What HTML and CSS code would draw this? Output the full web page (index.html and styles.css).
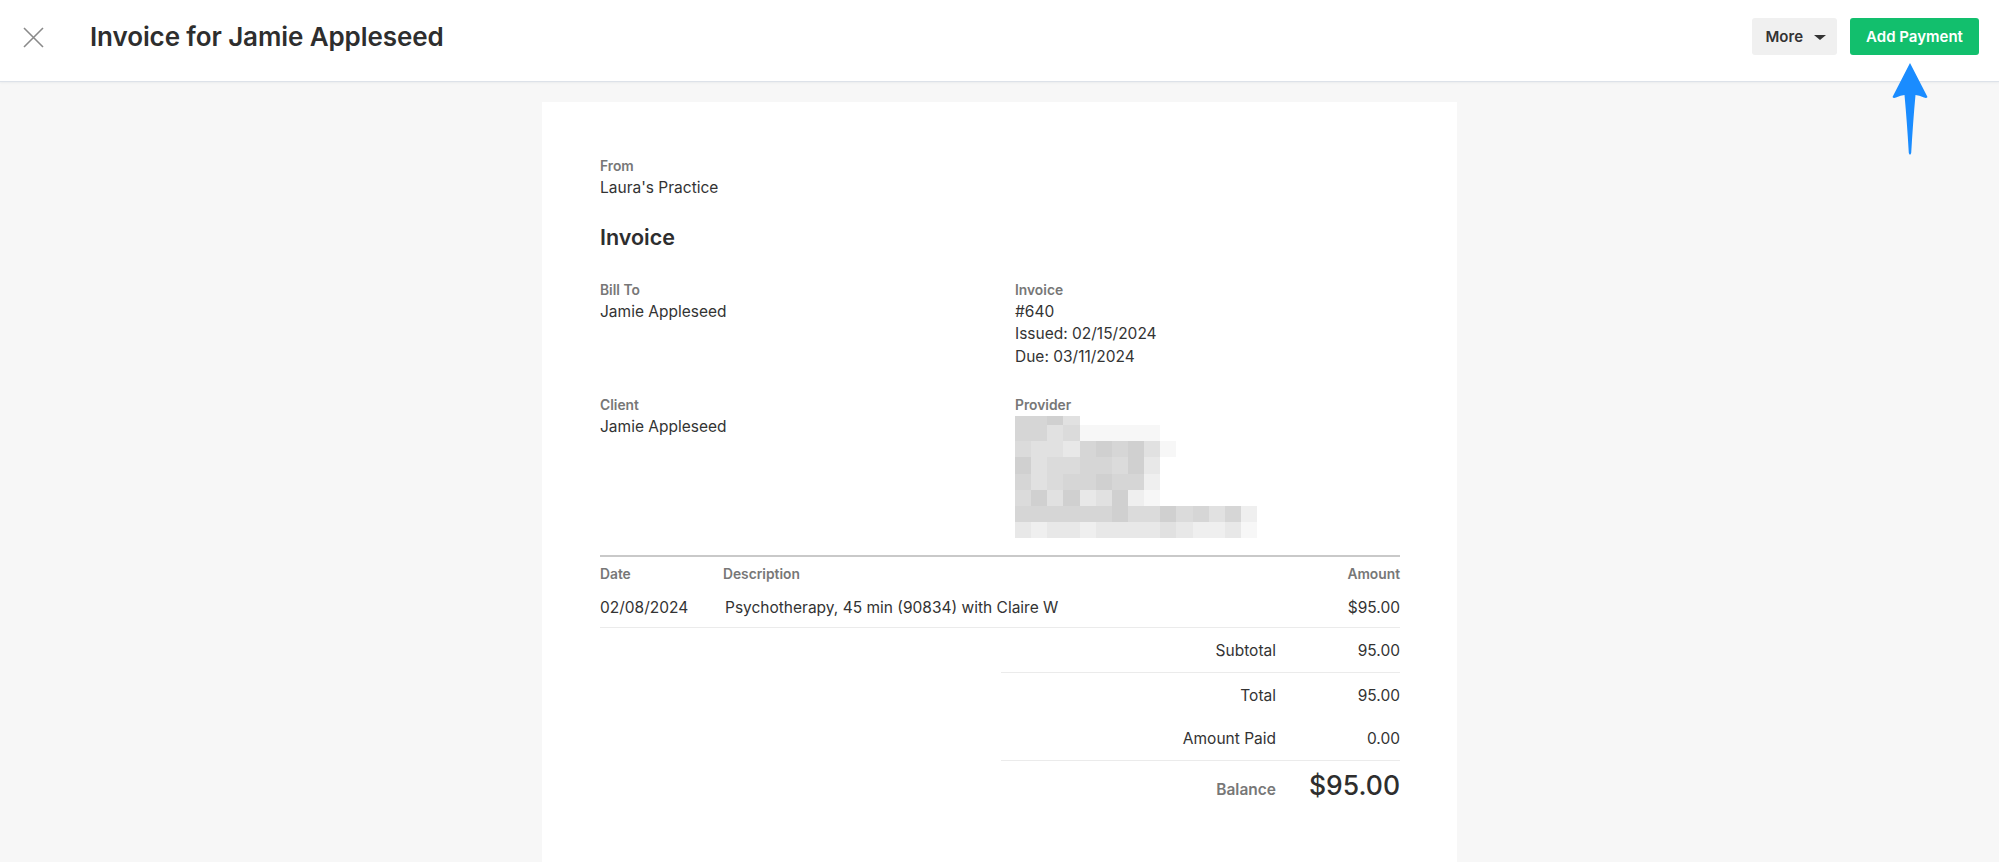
FILE: index.html
```html
<!DOCTYPE html>
<html lang="en">
<head>
<meta charset="utf-8">
<title>Invoice for Jamie Appleseed</title>
<link rel="stylesheet" href="styles.css">
</head>
<body>
<div class="page">
  <header class="topbar">
    <button class="close" aria-label="Close">
      <svg width="21" height="21" viewBox="0 0 21 21"><path d="M1 1 L20 20 M20 1 L1 20" stroke="#8a8a8a" stroke-width="1.6" fill="none"/></svg>
    </button>
    <h1 class="title">Invoice for Jamie Appleseed</h1>
    <div class="actions">
      <button class="btn btn-more">More <span class="caret"></span></button>
      <button class="btn btn-primary">Add Payment</button>
    </div>
  </header>

  <svg class="arrow" width="40" height="100" viewBox="0 0 40 100">
    <path d="M20 3 L37.5 37 Q36.5 38.5 34 37.5 Q29 35 25.5 35 Q23 62 21.2 93 Q20 96.5 18.8 93 Q17 62 14.5 35 Q11 35 6 37.5 Q3.5 38.5 2.5 37 Z" fill="#1a8cff"/>
  </svg>

  <main class="content">
    <section class="card">
      <div class="field">
        <div class="label">From</div>
        <div class="value">Laura's Practice</div>
      </div>

      <h2 class="doc-title">Invoice</h2>

      <div class="info-grid">
        <div class="field">
          <div class="label">Bill To</div>
          <div class="value">Jamie Appleseed</div>
        </div>
        <div class="field">
          <div class="label">Invoice</div>
          <div class="value">#640</div>
          <div class="value">Issued: 02/15/2024</div>
          <div class="value">Due: 03/11/2024</div>
        </div>
        <div class="field">
          <div class="label">Client</div>
          <div class="value">Jamie Appleseed</div>
        </div>
        <div class="field">
          <div class="label">Provider</div>
          <div class="pixelated">
            <span class="s2"></span><span class="s2"></span><span class="s1"></span><span class="s4"></span><span></span><span></span><span></span><span></span><span></span><span></span><span></span><span></span><span></span><span></span><span></span>
            <span class="s2"></span><span class="s2"></span><span class="s4"></span><span class="s3"></span><span class="s7"></span><span class="s7"></span><span class="s7"></span><span class="s7"></span><span class="s7"></span><span></span><span></span><span></span><span></span><span></span><span></span>
            <span class="s3"></span><span class="s4"></span><span class="s4"></span><span class="s5"></span><span class="s2"></span><span class="s1"></span><span class="s2"></span><span class="s1"></span><span class="s4"></span><span class="s7"></span><span></span><span></span><span></span><span></span><span></span>
            <span class="s1"></span><span class="s4"></span><span class="s3"></span><span class="s3"></span><span class="s2"></span><span class="s2"></span><span class="s3"></span><span class="s1"></span><span class="s5"></span><span></span><span></span><span></span><span></span><span></span><span></span>
            <span class="s2"></span><span class="s4"></span><span class="s3"></span><span class="s2"></span><span class="s2"></span><span class="s1"></span><span class="s2"></span><span class="s2"></span><span class="s6"></span><span></span><span></span><span></span><span></span><span></span><span></span>
            <span class="s3"></span><span class="s1"></span><span class="s4"></span><span class="s1"></span><span class="s5"></span><span class="s4"></span><span class="s1"></span><span class="s6"></span><span class="s7"></span><span></span><span></span><span></span><span></span><span></span><span></span>
            <span class="s2"></span><span class="s2"></span><span class="s2"></span><span class="s2"></span><span class="s2"></span><span class="s2"></span><span class="s1"></span><span class="s3"></span><span class="s3"></span><span class="s1"></span><span class="s3"></span><span class="s2"></span><span class="s4"></span><span class="s2"></span><span class="s6"></span>
            <span class="s5"></span><span class="s6"></span><span class="s5"></span><span class="s5"></span><span class="s6"></span><span class="s5"></span><span class="s5"></span><span class="s5"></span><span class="s5"></span><span class="s4"></span><span class="s5"></span><span class="s6"></span><span class="s6"></span><span class="s5"></span><span class="s7"></span>
          </div>
        </div>
      </div>

      <div class="items">
        <div class="items-head">
          <div>Date</div>
          <div>Description</div>
          <div class="num">Amount</div>
        </div>
        <div class="items-row">
          <div>02/08/2024</div>
          <div>Psychotherapy, 45 min (90834) with Claire W</div>
          <div class="num">$95.00</div>
        </div>
      </div>

      <div class="totals">
        <div class="total-row bordered">
          <div class="t-label">Subtotal</div>
          <div class="t-value">95.00</div>
        </div>
        <div class="total-row">
          <div class="t-label">Total</div>
          <div class="t-value">95.00</div>
        </div>
        <div class="total-row bordered">
          <div class="t-label">Amount Paid</div>
          <div class="t-value">0.00</div>
        </div>
        <div class="total-row balance">
          <div class="t-label">Balance</div>
          <div class="t-value">$95.00</div>
        </div>
      </div>
    </section>
  </main>
</div>
</body>
</html>
```

FILE: styles.css
```css
* { box-sizing: border-box; }

html, body {
  margin: 0;
  padding: 0;
}

body {
  background: #f7f7f7;
  font-family: Inter, "Liberation Sans", Arial, sans-serif;
  color: #333;
  overflow: hidden;
}

.page {
  position: relative;
  min-height: 100vh;
}

/* Top bar */
.topbar {
  height: 82px;
  background: #fff;
  border-bottom: 1px solid #dde2e9;
  box-shadow: 0 1px 2px rgba(40, 60, 90, 0.06);
  display: flex;
  align-items: flex-start;
  padding: 18px 20px 0 23px;
}

.close {
  width: 21px;
  height: 21px;
  margin-top: 9px;
  padding: 0;
  border: 0;
  background: none;
  display: block;
}

.close svg { display: block; }

.title {
  margin: 1px 0 0 46px;
  font-size: 26px;
  line-height: 36px;
  font-weight: 600;
  color: #2e2e2e;
  letter-spacing: -0.1px;
}

.actions {
  margin-left: auto;
  display: flex;
  gap: 13px;
}

.btn {
  height: 37px;
  border: 0;
  border-radius: 3px;
  font-family: inherit;
  font-size: 15px;
  font-weight: 600;
  display: flex;
  align-items: center;
  padding: 0 13px;
}

.btn-more {
  background: #f0f0f0;
  color: #333;
  padding: 0 11px 0 14px;
  gap: 11px;
}

.caret {
  width: 0;
  height: 0;
  border-left: 6px solid transparent;
  border-right: 6px solid transparent;
  border-top: 5px solid #333;
  margin-top: 1px;
}

.btn-primary {
  background: #12bf6d;
  color: #fff;
  width: 129px;
  justify-content: center;
}

/* annotation arrow */
.arrow {
  position: absolute;
  left: 1890px;
  top: 60px;
}

/* Card */
.content {
  padding-top: 20px;
}

.card {
  width: 915px;
  margin: 0 auto;
  min-height: calc(100vh - 102px);
  background: #fff;
  padding: 55px 57px 40px 58px;
}

.field { display: block; }

.label {
  font-size: 13.8px;
  line-height: 19.5px;
  font-weight: 600;
  color: #777;
}

.value {
  font-size: 15.5px;
  line-height: 22.5px;
  color: #333;
}

.doc-title {
  margin: 24px 0 0;
  font-size: 21.5px;
  line-height: 29px;
  font-weight: 600;
  color: #2e2e2e;
}

.info-grid {
  margin-top: 29px;
  display: grid;
  grid-template-columns: 385px 385px;
  column-gap: 30px;
  row-gap: 28px;
}

.pixelated {
  display: grid;
  grid-template-columns: repeat(15, 16.15px);
  grid-template-rows: 9.5px repeat(7, 16.2px);
  filter: blur(0.6px);
}

.s1 { background: #d0d0d0; }
.s2 { background: #d6d6d6; }
.s3 { background: #dbdbdb; }
.s4 { background: #e1e1e1; }
.s5 { background: #e8e8e8; }
.s6 { background: #efefef; }
.s7 { background: #f7f7f7; }

/* Items table */
.items {
  margin-top: 17px;
  border-top: 2px solid #c9c9c9;
}

.items-head,
.items-row {
  display: grid;
  grid-template-columns: 123px 1fr 200px;
}

.items-head {
  padding: 8px 0 0;
  font-size: 13.8px;
  line-height: 19.5px;
  font-weight: 600;
  color: #777;
}

.items-row {
  padding: 12px 0 8px;
  font-size: 15.5px;
  line-height: 22.5px;
  color: #333;
  border-bottom: 1px solid #ebebeb;
}

.items-row > div:nth-child(2) { padding-left: 2px; }

.num { text-align: right; }

/* Totals */
.totals {
  margin-left: 401px;
}

.total-row {
  display: grid;
  grid-template-columns: 1fr 124px;
  align-items: baseline;
  padding: 12px 0 9px;
  font-size: 15.5px;
  line-height: 22.5px;
  color: #333;
}

.total-row.bordered { border-bottom: 1px solid #ebebeb; }

.t-label,
.t-value { text-align: right; }

.balance {
  padding-top: 8px;
}

.balance .t-label {
  font-weight: 600;
  color: #777;
}

.balance .t-value {
  font-size: 26.5px;
  line-height: 32px;
  font-weight: 500;
  color: #2e2e2e;
}
```
